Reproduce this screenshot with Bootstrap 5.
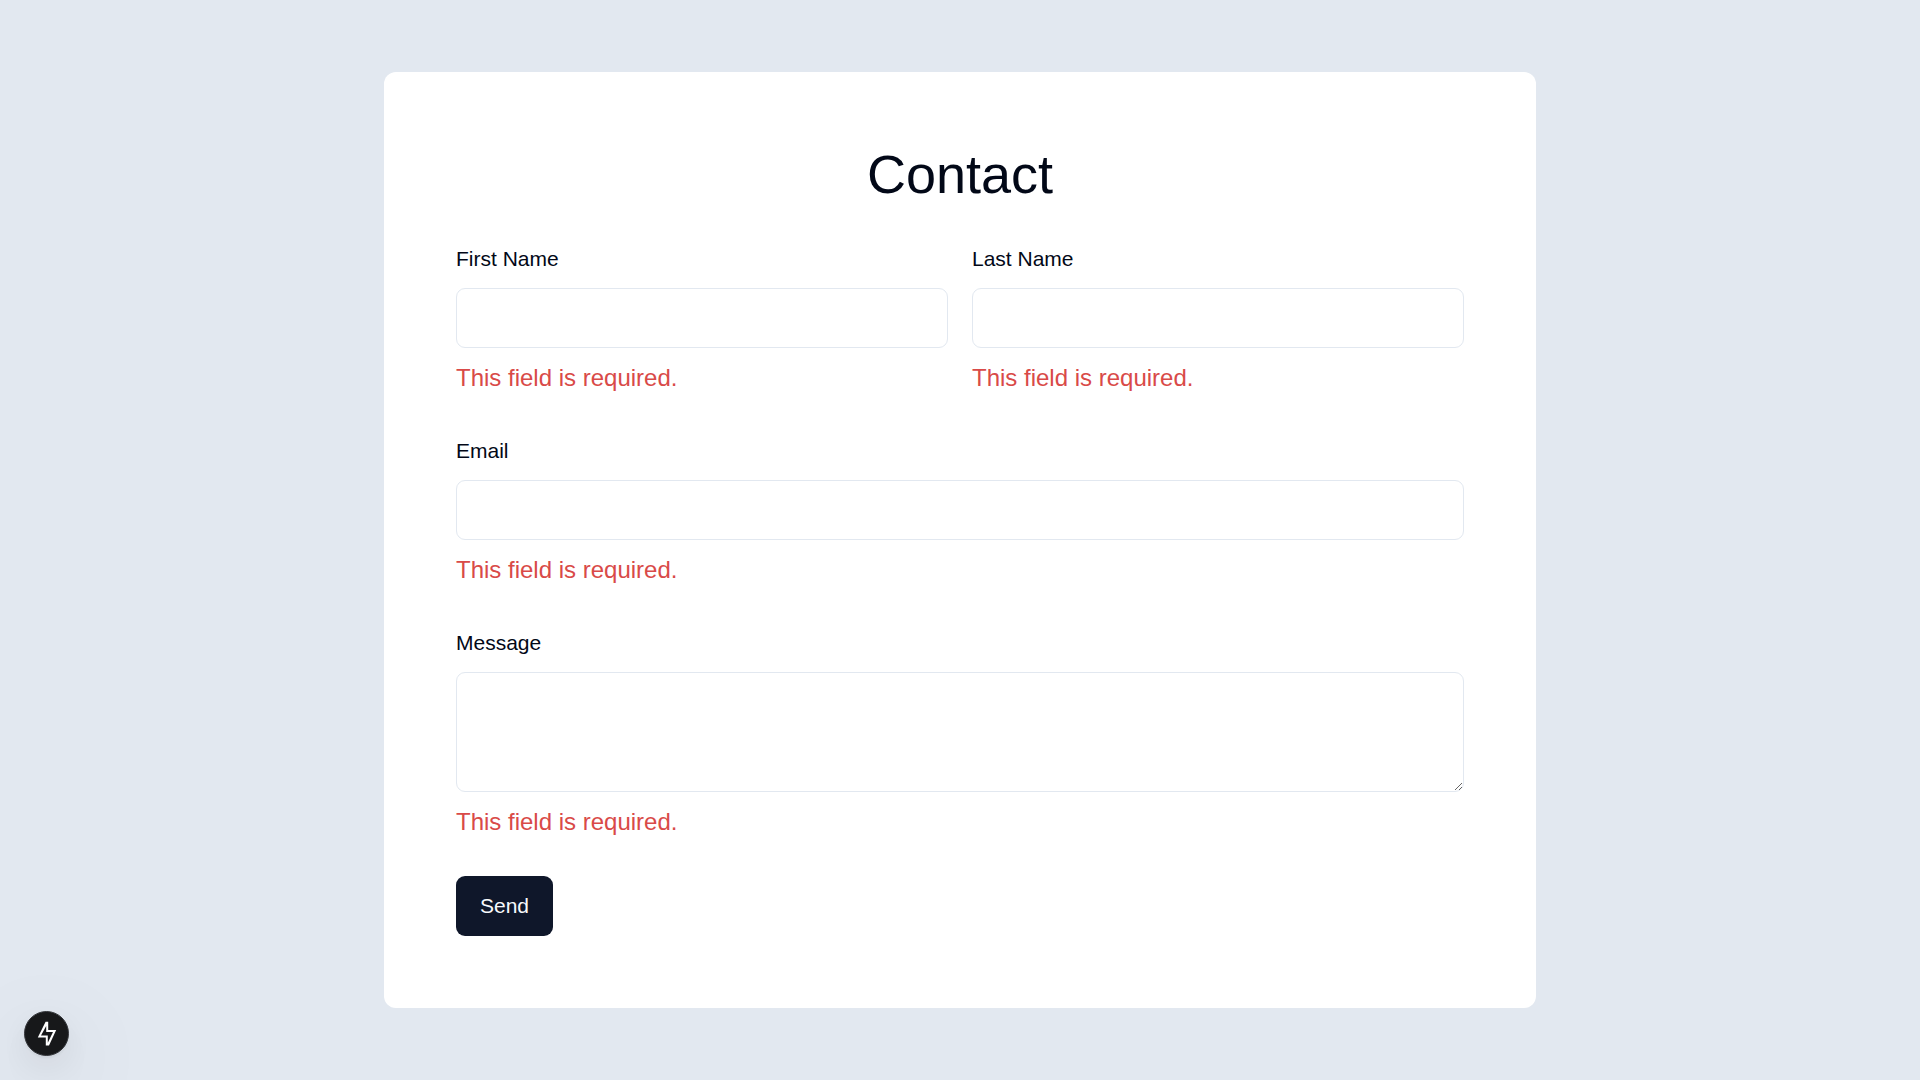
<!DOCTYPE html>
<html lang="en">
<head>
<meta charset="utf-8">
<meta name="viewport" content="width=device-width, initial-scale=1">
<title>Contact</title>
<link href="https://cdn.jsdelivr.net/npm/bootstrap@5.3.0/dist/css/bootstrap.min.css" rel="stylesheet">
<style>
  body {
    background: #e2e8f0;
    color: #020817;
    font-family: "Liberation Sans", Arial, sans-serif;
    font-size: 24px;
    line-height: 36px;
  }
  .page-wrap { padding: 72px 24px; }
  .contact-card { max-width: 1152px; padding: 72px; border-radius: 12px; }
  .contact-title { font-size: 54px; line-height: 60px; font-weight: 400; margin-bottom: 36px; }
  .contact-form { display: grid; gap: 36px; }
  .name-row { --bs-gutter-x: 24px; --bs-gutter-y: 36px; margin-top: 0; }
  .name-row > * { margin-top: 0; }
  .field { display: grid; gap: 12px; }
  .field label { font-size: 21px; line-height: 24px; }
  .field .form-control {
    height: 60px;
    padding: 12px 18px;
    border: 1px solid #e2e8f0;
    border-radius: 9px;
    font-size: 21px;
    line-height: 30px;
  }
  .field textarea.form-control { height: 120px; }
  .field-error { color: #d94a48; }
  .btn-send {
    --bs-btn-color: #f8fafc;
    --bs-btn-bg: #0f172a;
    --bs-btn-hover-color: #f8fafc;
    --bs-btn-hover-bg: #1e293b;
    --bs-btn-border-width: 0;
    --bs-btn-border-radius: 9px;
    --bs-btn-font-size: 21px;
    --bs-btn-line-height: 30px;
    --bs-btn-padding-x: 24px;
    --bs-btn-padding-y: 15px;
  }
  .dev-indicator {
    position: fixed;
    left: 24px;
    bottom: 24px;
    width: 45px;
    height: 45px;
    background: #17181a;
    border: 1px solid #34363a;
    box-shadow: 0 2px 3px rgba(0, 0, 0, .06), 0 12px 36px rgba(0, 0, 0, .08), 0 24px 96px rgba(0, 0, 0, .14);
  }
</style>
<script src="https://cdn.jsdelivr.net/npm/bootstrap@5.3.0/dist/js/bootstrap.bundle.min.js" defer></script>
</head>
<body>
<main class="page-wrap">
  <section class="contact-card bg-white mx-auto">
    <h1 class="contact-title text-center">Contact</h1>
    <form class="contact-form" novalidate>
      <div class="row name-row">
        <div class="col-6">
          <div class="field">
            <div><label for="first-name">First Name</label></div>
            <input type="text" class="form-control" id="first-name" aria-describedby="first-name-error" required>
            <div class="field-error" id="first-name-error">This field is required.</div>
          </div>
        </div>
        <div class="col-6">
          <div class="field">
            <div><label for="last-name">Last Name</label></div>
            <input type="text" class="form-control" id="last-name" aria-describedby="last-name-error" required>
            <div class="field-error" id="last-name-error">This field is required.</div>
          </div>
        </div>
      </div>
      <div class="field">
        <div><label for="email">Email</label></div>
        <input type="email" class="form-control" id="email" aria-describedby="email-error" required>
        <div class="field-error" id="email-error">This field is required.</div>
      </div>
      <div class="field">
        <div><label for="message">Message</label></div>
        <textarea class="form-control" id="message" aria-describedby="message-error" required></textarea>
        <div class="field-error" id="message-error">This field is required.</div>
      </div>
      <div class="d-flex">
        <button type="submit" class="btn btn-send">Send</button>
      </div>
    </form>
  </section>
</main>
<button type="button" class="dev-indicator rounded-circle p-0 d-flex align-items-center justify-content-center" aria-label="Open developer tools">
  <svg width="43" height="43" viewBox="0 0 43 43" aria-hidden="true">
    <path fill="#fff" fill-rule="evenodd" d="M20.600 9.800H23.200V18H31.200L24 33.600H20.800V25.600H12.800ZM21.200 14 16 23.600H22.800V30.800L28 20H21.200Z"/>
  </svg>
</button>
</body>
</html>
